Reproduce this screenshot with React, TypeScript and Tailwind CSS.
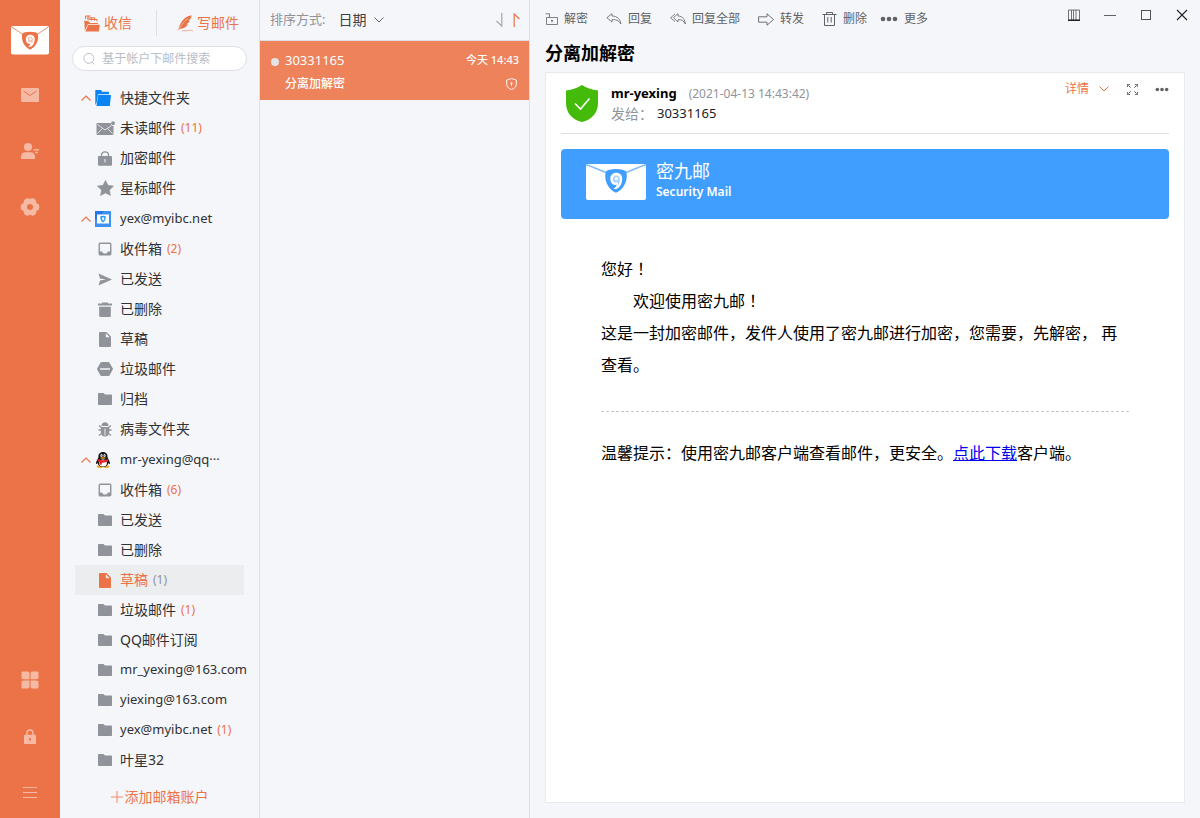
import type { ReactNode } from "react";

type IconProps = { className?: string };

/* ---------- brand ---------- */

function BrandSeal({ x, y, scale, color }: { x: number; y: number; scale: number; color: string }) {
  return (
    <g transform={`translate(${x} ${y}) scale(${scale})`}>
      <path d="M0.3 5.5C0.5 2.5 2 1.6 4.5 1.2C8.500 .1 13.5 .1 17.500 1.200C20 1.600 21.500 2.500 21.700 5.500C22.500 14 18 21 11 24.300C4 21 -.5 14 .3 5.500Z" fill={color} />
      <path d="M11.300 4.300C7.700 4.300 5.300 6.800 5.300 10.300C5.300 14 7.500 16.300 10 16.400C10.800 16.400 11.300 16.100 11.600 15.700C11.400 17.800 10.300 19.300 8.300 20.300C10 21 12 20.500 13.500 19.300C16 17.200 17.200 14 17.200 10.300C17.200 6.500 14.800 4.300 11.300 4.300Z" fill="#fff" />
      <path d="M11.300 6.900C9.200 6.900 7.900 8.300 7.900 10.400C7.900 12.600 9 14.200 10.500 14.200C9.800 12.800 13.400 13 13.300 16.800C14.300 15 14.800 12.900 14.800 10.600C14.800 8.300 13.500 6.900 11.300 6.900Z" fill={color} opacity=".45" />
      <circle cx="11.400" cy="10.200" r="1.600" fill="#fff" />
    </g>
  );
}

function RailLogo() {
  return (
    <svg viewBox="0 0 38 29" className="h-[29px] w-[38px]" aria-hidden="true">
      <rect width="38" height="28.500" rx="2" fill="#fff" />
      <path d="M1 1.200L12.500 8.800M37 1.200L25.500 8.800" stroke="#ec7347" strokeWidth=".8" />
      <BrandSeal x={10.800} y={5.400} scale={0.750} color="#ec7347" />
    </svg>
  );
}

function BannerLogo() {
  return (
    <svg viewBox="0 0 60 36" className="h-9 w-[60px]" aria-hidden="true">
      <rect width="60" height="36" rx="2" fill="#fff" />
      <path d="M0 .5L20 8.500M60 .5L40 8.500" stroke="#7ebbfb" strokeWidth="1.600" />
      <BrandSeal x={19} y={4.500} scale={1} color="#409eff" />
    </svg>
  );
}

/* ---------- rail icons ---------- */

const RailMail = () => (
  <svg viewBox="0 0 18 14" className="h-[14px] w-[18px]" aria-hidden="true">
    <rect width="18" height="14" rx="1" fill="#f6b9a3" />
    <path d="M2.500 3L9 7.500L15.500 3" fill="none" stroke="#ec7347" strokeWidth="1" />
  </svg>
);
const RailContact = () => (
  <svg viewBox="0 0 18 16" className="h-4 w-[18px]" fill="#f6b9a3" aria-hidden="true">
    <circle cx="7" cy="4" r="4" />
    <path d="M0 16V13.500C0 10.800 2 9.300 4.500 9.300H9.500C12 9.300 14 10.800 14 13.500V16ZM12.500 6H18V7.500H12.500ZM14 8.700H17V10.200H14Z" />
  </svg>
);
const RailGear = () => (
  <svg viewBox="0 0 20 18" className="h-[18px] w-5" fill="#f6b9a3" aria-hidden="true">
    <path fillRule="evenodd" d="M7.300.3C8.500 0 8.800.9 10 .9C11.200.9 11.500 0 12.700.3C14.100.6 15 1.300 15.800 2.300C16.500 3.200 15.900 3.900 16.500 4.900C17.100 5.900 18.500 5.500 19 6.700C19.500 8.200 19.500 9.800 19 11.300C18.500 12.500 17.100 12.100 16.500 13.100C15.900 14.100 16.500 14.800 15.800 15.700C15 16.700 14.100 17.400 12.700 17.700C11.500 18 11.200 17.100 10 17.100C8.800 17.100 8.500 18 7.300 17.700C5.900 17.400 5 16.700 4.200 15.700C3.500 14.800 4.100 14.100 3.500 13.100C2.900 12.100 1.500 12.500 1 11.300C.5 9.800.5 8.200 1 6.700C1.500 5.500 2.900 5.900 3.500 4.900C4.100 3.900 3.500 3.200 4.200 2.300C5 1.300 5.900.6 7.300.3ZM10 6A3 3 0 1 0 10 12A3 3 0 1 0 10 6Z" />
  </svg>
);
const RailGrid = () => (
  <svg viewBox="0 0 18 18" className="h-[18px] w-[18px]" fill="#f6b9a3" aria-hidden="true">
    <path d="M2 .5H6.500C7.800.5 8.500 1.200 8.500 2.500V8.200H2.500C1.200 8.200.5 7.500.5 6.200V2C.5 1 1 .5 2 .5ZM11.500.5H16C17 .5 17.500 1 17.500 2V6.200C17.500 7.500 16.800 8.200 15.500 8.200H9.500V2.500C9.500 1.200 10.200.5 11.500.5ZM2.500 9.500H8.500V15.500C8.500 16.800 7.800 17.500 6.500 17.500H2C1 17.500.5 17 .5 16V11.500C.5 10.200 1.200 9.500 2.500 9.500ZM9.500 9.500H15.500C16.800 9.500 17.500 10.200 17.500 11.500V16C17.500 17 17 17.500 16 17.500H11.500C10.200 17.500 9.500 16.800 9.500 15.500Z" />
  </svg>
);
const RailLock = () => (
  <svg viewBox="0 0 12 15" className="h-[15px] w-3" aria-hidden="true">
    <path d="M3 7V4C3 2 4.200 1 6 1C7.800 1 9 2 9 4V7" fill="none" stroke="#f6b9a3" strokeWidth="1.500" />
    <rect y="5.800" width="12" height="9.200" rx="1" fill="#f6b9a3" />
    <path d="M5 9H7V10.500H6.500V12H5.500V10.500H5Z" fill="#ec7347" />
  </svg>
);
const RailMenu = () => (
  <svg viewBox="0 0 14 12" className="h-3 w-[14px]" aria-hidden="true">
    <path d="M0 1.500H14M0 6.500H14M0 11.500H14" stroke="#f6b9a3" />
  </svg>
);

function RailButton({ label, children }: { label: string; children: ReactNode }) {
  return (
    <button type="button" aria-label={label} className="flex h-14 w-full items-center justify-center">
      {children}
    </button>
  );
}

/* ---------- folder icons ---------- */

const Inbox = () => (
  <svg viewBox="0 0 14 14" className="h-[14px] w-[14px]" aria-hidden="true">
    <rect x="1.250" y="1.250" width="11.500" height="11.500" rx="1" fill="none" stroke="#909399" strokeWidth="1.400" />
    <path d="M1 9.500H4.200C4.500 11 5.500 11.500 7 11.500C8.500 11.500 9.500 11 9.800 9.500H13V13H1Z" fill="#909399" />
  </svg>
);
const Folder = () => (
  <svg viewBox="0 0 14 12" className="h-3 w-[14px]" aria-hidden="true">
    <path d="M1 0H5.500L7 1.500H13C13.700 1.500 14 1.800 14 2.500V11C14 11.700 13.700 12 13 12H1C.3 12 0 11.700 0 11V1C0 .3.300 0 1 0Z" fill="#909399" />
  </svg>
);
const Draft = () => (
  <svg viewBox="0 0 12 15" className="h-[15px] w-3" fill="currentColor" aria-hidden="true">
    <path fillRule="evenodd" d="M1.200 0H7.500L12 4.500V13.500C12 14.500 11.500 15 10.500 15H1.500C.5 15 0 14.500 0 13.500V1.200C0 .4.400 0 1.200 0ZM6.800 1.200V4.200C6.800 4.900 7.100 5.200 7.800 5.200H10.800Z" />
  </svg>
);
const Trash = () => (
  <svg viewBox="0 0 14 15" className="h-[15px] w-[14px]" fill="#909399" aria-hidden="true">
    <path d="M4 .5H10V1.500H14V3.500H0V1.500H4ZM1.200 4.800H12.800V13.500C12.800 14.500 12.300 15 11.300 15H2.700C1.700 15 1.200 14.500 1.200 13.500Z" />
  </svg>
);
const Sent = () => (
  <svg viewBox="0 0 14 13" className="h-[13px] w-[14px]" fill="#909399" aria-hidden="true">
    <path d="M.5.500L14 6.500L.5 12.500L2 7.500L8 6.500L2 5.500Z" />
  </svg>
);
const Spam = () => (
  <svg viewBox="0 0 16 14" className="h-[14px] w-4" aria-hidden="true">
    <path d="M4.700 0H11.300C11.800 0 12.200.2 12.400.6L15.700 6.300C16 6.800 16 7.200 15.700 7.700L12.400 13.400C12.200 13.800 11.800 14 11.300 14H4.700C4.200 14 3.800 13.800 3.600 13.400L.3 7.700C0 7.200 0 6.800.3 6.300L3.600.6C3.800.2 4.200 0 4.700 0Z" fill="#909399" />
    <path d="M3 7H13" stroke="#f5f6f9" strokeWidth="1.500" />
  </svg>
);
const Bug = () => (
  <svg viewBox="0 0 14 15" className="h-[15px] w-[14px]" aria-hidden="true">
    <path d="M.5 8H13.500M1 3.500L3.500 5.500M13 3.500L10.500 5.500M1 13.500L3.500 11.500M13 13.500L10.500 11.500" stroke="#909399" strokeWidth="1.300" />
    <path d="M3.500 4C3.500 1.500 5 .3 7 .3C9 .3 10.500 1.500 10.500 4ZM2.800 4.900H11.200V10C11.200 13 9.500 14.600 7 14.600C4.500 14.600 2.800 13 2.800 10Z" fill="#909399" />
    <path d="M7 6.500V13.500" stroke="#f5f6f9" strokeWidth=".9" />
  </svg>
);
const Unread = () => (
  <svg viewBox="0 0 19 14" className="h-[14px] w-[19px]" aria-hidden="true">
    <path d="M1 2H14.800C14.800 4.200 15.800 5 17.500 5V12.500C17.500 13.500 17 14 16 14H2C1 14 .5 13.500.5 12.500V2.500C.5 2.200.7 2 1 2Z" fill="#909399" />
    <path d="M1.500 3.500L9 9L15.500 4.500M1.500 12.500L6.500 7.300M16.500 12.500L11.500 7.300" fill="none" stroke="#f5f6f9" strokeWidth=".8" />
    <circle cx="17" cy="2.200" r="1.900" fill="#909399" />
  </svg>
);
const Lock = () => (
  <svg viewBox="0 0 14 15" className="h-[15px] w-[14px]" aria-hidden="true">
    <path d="M3.500 6V4C3.500 2 4.800.900 7 .9C9.200.9 10.500 2 10.500 4V6" fill="none" stroke="#909399" strokeWidth="1.300" />
    <rect y="5" width="14" height="9.800" rx="1" fill="#909399" />
    <path d="M7 8V11.500" stroke="#f5f6f9" strokeWidth="1" />
  </svg>
);
const Star = () => (
  <svg viewBox="0 0 17 16" className="h-4 w-[17px]" aria-hidden="true">
    <path d="M8.500.3L11 5.300L16.600 6.100L12.500 10L13.500 15.600L8.500 13L3.500 15.600L4.500 10L.4 6.100L6 5.300Z" fill="#909399" stroke="#909399" strokeWidth=".5" strokeLinejoin="round" />
  </svg>
);
const BlueFolder = () => (
  <svg viewBox="0 0 16 16" className="h-4 w-4" fill="#0b84f3" aria-hidden="true">
    <path d="M.3 0H6L7.200 1.800H14V4.200H3L1.600 12.800L.3 15Z" />
    <path d="M3.200 5H16L14.800 16H1.500Z" />
  </svg>
);
const MyibcIcon = () => (
  <svg viewBox="0 0 16 16" className="h-4 w-4" aria-hidden="true">
    <rect width="16" height="16" rx=".6" fill="#3d92f2" />
    <path d="M0 0H9L3 8L0 9Z" fill="#2478e6" />
    <rect x="2" y="3.500" width="12" height="9" fill="#fff" />
    <path d="M5.300 5.200Q8 4.200 10.700 5.200Q11 9.500 8 11.500Q5 9.500 5.300 5.200Z" fill="#2d9cf0" />
    <path d="M8.300 6.200Q6.700 6.300 7 8Q8 8.400 7.800 10Q9.500 8.500 9.300 7Q9 6.200 8.300 6.200Z" fill="#fff" />
  </svg>
);
const QQIcon = () => (
  <svg viewBox="0 0 16 16" className="h-4 w-4" aria-hidden="true">
    <ellipse cx="5" cy="14.600" rx="3.300" ry="1.300" fill="#f9a61a" />
    <ellipse cx="11" cy="14.600" rx="3.300" ry="1.300" fill="#f9a61a" />
    <path d="M8 0C4.800 0 3.200 2.300 3.400 5.500C2.500 7.500 1 9.500 1 11.500C1.200 12.500 2 12 2.700 11C3.200 13.700 5 15 8 15C11 15 12.800 13.700 13.300 11C14 12 14.800 12.500 15 11.500C15 9.500 13.500 7.500 12.600 5.500C12.800 2.300 11.200 0 8 0Z" fill="#161616" />
    <ellipse cx="8" cy="11" rx="3.900" ry="3.600" fill="#fff" />
    <ellipse cx="6.500" cy="3.600" rx="1.100" ry="1.500" fill="#fff" />
    <ellipse cx="9.500" cy="3.600" rx="1.100" ry="1.500" fill="#fff" />
    <circle cx="6.800" cy="3.800" r=".5" />
    <circle cx="9.200" cy="3.800" r=".5" />
    <ellipse cx="8" cy="6" rx="2.800" ry=".8" fill="#f9a61a" />
    <path d="M3 7Q8 9.600 13 7L13.300 9.300Q10 11 6.800 10.700V12.800L4.500 12.500L4.600 10L2.800 9.300Z" fill="#e8202a" />
  </svg>
);

/* ---------- small line icons ---------- */

const Chevron = ({ className = "" }: IconProps) => (
  <svg viewBox="0 0 10 6" className={className} fill="none" stroke="currentColor" aria-hidden="true">
    <path d="M.5.500L5 5L9.500.5" />
  </svg>
);
const ChevronUp = () => (
  <svg viewBox="0 0 10 6" className="h-[6px] w-[10px]" fill="none" stroke="#ec7347" strokeWidth="1.200" aria-hidden="true">
    <path d="M.5 5.500L5 1L9.500 5.500" />
  </svg>
);
const ReceiveIcon = () => (
  <svg viewBox="0 0 16 17" className="h-[17px] w-4" aria-hidden="true">
    <path d="M1.500 1H6.500M1.500 1V4M4 1V5.500M3 3H7.500V5.500M7 2.800H10.500V5.500M5 4.500H13V6.500" fill="none" stroke="#ec7347" strokeWidth="1" />
    <path d="M.3 5.500L5 6.500L6 8H14V9H4L1.500 14L.8 15.500Z" fill="#ec7347" />
    <path d="M4.300 9.800H15.800L14.800 16.500H1.300Z" fill="#ec7347" />
  </svg>
);
const FeatherIcon = () => (
  <svg viewBox="0 0 16 17" className="h-[17px] w-4" aria-hidden="true">
    <path d="M14.500.3C10.500.8 7 3.300 4.800 6.500C3.300 8.700 2.200 11 2 13C1.300 14 .7 15 .3 16C1 15 1.800 14.200 2.700 13.700C5.500 13.900 9 12.500 11 9.500L9 9.300C10.500 8.800 12 7.600 13 6L11.500 5.800C13.500 4.300 14.500 2.200 14.500.3Z" fill="#ec7347" />
    <path d="M2.500 13C4.500 9.500 7.500 6 11 3.500" stroke="#f5f6f9" strokeWidth=".5" fill="none" />
    <path d="M5 16.300C7.500 14.200 9 16.800 11.500 15.500C13 14.800 14 15.300 15.800 16" stroke="#ec7347" strokeWidth=".6" fill="none" />
  </svg>
);
const SearchIcon = () => (
  <svg viewBox="0 0 14 14" className="h-[14px] w-[14px]" fill="none" stroke="#b4b8c0" strokeWidth="1" aria-hidden="true">
    <circle cx="6.700" cy="6.300" r="5.700" />
    <path d="M10.500 10.500L13 13.200" />
  </svg>
);
const UnlockIcon = () => (
  <svg viewBox="0 0 13 12" className="h-3 w-[13px]" fill="none" stroke="#606266" strokeWidth=".8" aria-hidden="true">
    <path d="M.5.800H4.500V4.500M1.500 4.500H12.500V11.500H1.500ZM7 6.800V9.500M6 7.500H8" />
  </svg>
);
const ReplyIcon = () => (
  <svg viewBox="0 0 16 12" className="h-3 w-4" fill="none" stroke="#606266" strokeWidth=".8" strokeLinejoin="round" aria-hidden="true">
    <path d="M6 .7L.8 4.700L6 9V6.700C10 6.300 12.800 7.500 14.800 11C14.500 6.500 11.500 3 6 3Z" />
  </svg>
);
const ReplyAllIcon = () => (
  <svg viewBox="0 0 16 12" className="h-3 w-4" fill="none" stroke="#606266" strokeWidth=".8" strokeLinejoin="round" aria-hidden="true">
    <path d="M8 .7L3.500 4.700L8 9V6.700C11.500 6.300 13.800 7.800 15.300 11C15 6.500 12.500 3 8 3ZM5 1L.6 4.800L5 8.600" />
  </svg>
);
const ForwardIcon = () => (
  <svg viewBox="0 0 16 13" className="h-[13px] w-4" fill="none" stroke="#606266" strokeWidth=".9" strokeLinejoin="round" aria-hidden="true">
    <path d="M.6 3.800H9V.8L15.500 6.500L9 12.200V9.200H.6Z" />
  </svg>
);
const DeleteIcon = () => (
  <svg viewBox="0 0 15 14" className="h-[14px] w-[15px]" fill="none" stroke="#606266" strokeWidth="1" aria-hidden="true">
    <path d="M.5 2.500H14.500M4.500 2.500V.5H10.500V2.500M2.500 2.500V13.500H12.500V2.500M5.800 5V10.500M9.200 5V10.500" />
  </svg>
);
const Dots = ({ className = "" }: IconProps) => (
  <svg viewBox="0 0 18 6" className={className} fill="#606266" aria-hidden="true">
    <circle cx="3" cy="3" r="2.300" />
    <circle cx="9" cy="3" r="2.300" />
    <circle cx="15" cy="3" r="2.300" />
  </svg>
);
const MailShield = () => (
  <svg viewBox="0 0 11 12" className="h-3 w-[11px]" fill="none" stroke="#fff" strokeWidth=".9" aria-hidden="true">
    <path d="M5.500.6L10.300 2V6.300C10.300 9 8 10.700 5.500 11.500C3 10.700.7 9 .7 6.300V2Z" />
    <path d="M5.500 4.300V7.800M4.300 5.300H6.700" />
  </svg>
);
const GreenShield = () => (
  <svg viewBox="0 0 32 37" className="h-[37px] w-8" aria-hidden="true">
    <path d="M16 0C20.500 3 25.500 4.800 32 5.500V18C32 28 26 34.500 16 37C6 34.500 0 28 0 18V5.500C6.500 4.800 11.500 3 16 0Z" fill="#44bb0b" />
    <path d="M9 18.500L14.500 24L23.500 13.500" fill="none" stroke="#fff" strokeWidth="1.600" />
  </svg>
);

/* ---------- sidebar ---------- */

type FolderItem = { name: string; icon: ReactNode; count?: number; active?: boolean; latin?: boolean };
type FolderGroup = { name: string; icon: ReactNode; items: FolderItem[]; latin?: boolean };

const groups: FolderGroup[] = [
  {
    name: "快捷文件夹",
    icon: <BlueFolder />,
    items: [
      { name: "未读邮件", icon: <Unread />, count: 11 },
      { name: "加密邮件", icon: <Lock /> },
      { name: "星标邮件", icon: <Star /> },
    ],
  },
  {
    name: "yex@myibc.net",
    icon: <MyibcIcon />,
    latin: true,
    items: [
      { name: "收件箱", icon: <Inbox />, count: 2 },
      { name: "已发送", icon: <Sent /> },
      { name: "已删除", icon: <Trash /> },
      { name: "草稿", icon: <Draft /> },
      { name: "垃圾邮件", icon: <Spam /> },
      { name: "归档", icon: <Folder /> },
      { name: "病毒文件夹", icon: <Bug /> },
    ],
  },
  {
    name: "mr-yexing@qq···",
    icon: <QQIcon />,
    latin: true,
    items: [
      { name: "收件箱", icon: <Inbox />, count: 6 },
      { name: "已发送", icon: <Folder /> },
      { name: "已删除", icon: <Folder /> },
      { name: "草稿", icon: <Draft />, count: 1, active: true },
      { name: "垃圾邮件", icon: <Folder />, count: 1 },
      { name: "QQ邮件订阅", icon: <Folder /> },
      { name: "mr_yexing@163.com", icon: <Folder />, latin: true },
      { name: "yiexing@163.com", icon: <Folder />, latin: true },
      { name: "yex@myibc.net", icon: <Folder />, count: 1, latin: true },
      { name: "叶星32", icon: <Folder /> },
    ],
  },
];

function FolderRow({ item }: { item: FolderItem }) {
  return (
    <li>
      <button
        type="button"
        className={`flex h-[30px] w-full items-center whitespace-nowrap pl-5 ${
          item.active ? "bg-[#ebedef] text-[#ec7347]" : "text-[#303133]"
        }`}
      >
        <span className={`flex w-5 shrink-0 justify-center ${item.active ? "text-[#ec7347]" : "text-[#909399]"}`}>
          {item.icon}
        </span>
        <span className={`ml-[5px] ${item.latin ? "text-[13px]" : "text-sm"}`}>{item.name}</span>
        {item.count !== undefined && (
          <span className={`ml-[5px] text-xs ${item.active ? "text-[#909399]" : "text-[#ec7347]"}`}>({item.count})</span>
        )}
      </button>
    </li>
  );
}

function Sidebar() {
  return (
    <aside className="flex w-[200px] shrink-0 flex-col border-r border-[#dcdfe6]">
      <div className="flex h-[46px] items-center text-sm text-[#ec7347]">
        <button type="button" className="ml-6 flex items-center gap-1">
          <ReceiveIcon />
          收信
        </button>
        <div className="ml-6 h-[26px] w-px bg-[#dcdfe6]" />
        <button type="button" className="ml-5 flex items-center gap-1">
          <FeatherIcon />
          写邮件
        </button>
      </div>
      <label className="mx-3 flex h-[25px] items-center rounded-full border border-[#dcdfe6] bg-white pl-[10px]">
        <SearchIcon />
        <input
          type="search"
          aria-label="搜索"
          placeholder="基于帐户下邮件搜索"
          className="ml-[7px] w-full min-w-0 bg-transparent pr-3 text-xs outline-none placeholder:text-[#b9bdc6]"
        />
      </label>
      <nav className="mt-3 flex flex-col gap-px px-[15px]">
        {groups.map((group) => (
          <section key={group.name}>
            <button type="button" className="flex h-[30px] w-full items-center whitespace-nowrap pl-[6px] text-[#303133]">
              <ChevronUp />
              <span className="ml-1">{group.icon}</span>
              <span className={`ml-[9px] ${group.latin ? "text-[13px]" : "text-sm"}`}>{group.name}</span>
            </button>
            <ul>
              {group.items.map((item) => (
                <FolderRow key={item.name} item={item} />
              ))}
            </ul>
          </section>
        ))}
      </nav>
      <button type="button" className="mt-[10px] flex h-6 items-center justify-center gap-0.5 text-sm text-[#ec7347]">
        <svg viewBox="0 0 12 12" className="h-3 w-3" stroke="currentColor" strokeWidth=".8" aria-hidden="true">
          <path d="M6 0V12M0 6H12" />
        </svg>
        添加邮箱账户
      </button>
    </aside>
  );
}

/* ---------- message list ---------- */

function MessageList() {
  return (
    <section className="flex w-[270px] shrink-0 flex-col border-r border-[#dcdfe6]">
      <div className="flex h-[41px] items-center justify-between border-b border-[#dcdfe6] pl-[10px] pr-[9px]">
        <div className="flex items-center">
          <label htmlFor="sort" className="text-[13px] text-[#909399]">
            排序方式:
          </label>
          <div className="ml-[13px] grid items-center">
            <select id="sort" defaultValue="date" className="col-start-1 row-start-1 appearance-none bg-transparent pr-[18px] text-sm text-[#404246] outline-none">
              <option value="date">日期</option>
            </select>
            <Chevron className="pointer-events-none col-start-1 row-start-1 h-[6px] w-[10px] justify-self-end text-[#606266]" />
          </div>
        </div>
        <div className="flex items-center gap-[10px]">
          <button type="button" aria-label="降序">
            <svg viewBox="0 0 7 14" className="h-[14px] w-[7px]" fill="none" stroke="#a3a6ac" strokeWidth="1.200" aria-hidden="true">
              <path d="M5.800 0V13L.5 8" />
            </svg>
          </button>
          <button type="button" aria-label="升序">
            <svg viewBox="0 0 7 14" className="h-[14px] w-[7px]" fill="none" stroke="#ec7347" strokeWidth="1.200" aria-hidden="true">
              <path d="M1.200 14V1L6.500 6" />
            </svg>
          </button>
        </div>
      </div>
      <button type="button" className="flex flex-col bg-[#ed825b] px-[10px] pb-[5px] pt-2 text-left text-white">
        <span className="flex h-[23px] w-full items-center">
          <span className="ml-px mt-[3px] h-2 w-2 rounded-full bg-[#e4e4e6]" />
          <span className="ml-[6px] text-[13px]">30331165</span>
          <span className="ml-auto text-[11px] font-medium">今天 14:43</span>
        </span>
        <span className="flex h-[23px] w-full items-center justify-between pl-[15px] pr-[2px]">
          <span className="text-xs font-medium">分离加解密</span>
          <MailShield />
        </span>
      </button>
    </section>
  );
}

/* ---------- reader ---------- */

const actions: { label: string; icon: ReactNode }[] = [
  { label: "解密", icon: <UnlockIcon /> },
  { label: "回复", icon: <ReplyIcon /> },
  { label: "回复全部", icon: <ReplyAllIcon /> },
  { label: "转发", icon: <ForwardIcon /> },
  { label: "删除", icon: <DeleteIcon /> },
];

function Toolbar() {
  return (
    <header className="flex h-9 shrink-0 items-start justify-between">
      <div className="flex h-[38px] items-center gap-[13px] pl-[15px] text-xs text-[#606266]">
        <div className="flex items-center gap-[18px]">
          {actions.map((action) => (
            <button key={action.label} type="button" className="flex items-center gap-[6px]">
              {action.icon}
              {action.label}
            </button>
          ))}
        </div>
        <button type="button" className="flex items-center gap-[6px]">
          <Dots className="h-[6px] w-[18px]" />
          更多
        </button>
      </div>
      <div className="flex">
        <button type="button" aria-label="布局" className="flex h-[30px] w-9 items-center justify-center">
          <svg viewBox="0 0 12 12" className="h-3 w-3" fill="none" stroke="#505256" aria-hidden="true">
            <path d="M.5 1H11.500V11H.5ZM3.500 1V11M5.500 1V11M8 1V11" strokeWidth=".8" />
            <path d="M0 11.300H12" stroke="#111" strokeWidth="1.200" />
          </svg>
        </button>
        <button type="button" aria-label="最小化" className="flex h-[30px] w-9 items-center justify-center">
          <svg viewBox="0 0 12 12" className="h-3 w-3" stroke="#606266" aria-hidden="true">
            <path d="M0 6.500H12" />
          </svg>
        </button>
        <button type="button" aria-label="最大化" className="flex h-[30px] w-9 items-center justify-center">
          <svg viewBox="0 0 12 12" className="h-3 w-3" fill="none" stroke="#505256" aria-hidden="true">
            <rect x="1.500" y="1.500" width="9" height="9" />
          </svg>
        </button>
        <button type="button" aria-label="关闭" className="flex h-[30px] w-9 items-center justify-center">
          <svg viewBox="0 0 12 12" className="h-3 w-3" stroke="#202124" strokeWidth="1.100" aria-hidden="true">
            <path d="M1 1L11 11M11 1L1 11" />
          </svg>
        </button>
      </div>
    </header>
  );
}

const Bang = () => <span className="font-['Noto_Sans_CJK_TC',sans-serif] leading-none">！</span>;

function Reader() {
  return (
    <main className="flex min-w-0 flex-1 flex-col">
      <Toolbar />
      <h1 className="h-9 shrink-0 pl-[15px] text-lg leading-[34px] font-bold text-black">分离加解密</h1>
      <article className="mx-[15px] mb-[15px] flex-1 border border-[#e8eaee] bg-white px-[15px]">
        <div className="flex h-[61px] items-start border-b border-[#dcdfe6] pt-3">
          <div className="ml-[5px]">
            <GreenShield />
          </div>
          <div className="-mt-px ml-[13px]">
            <div className="flex h-5 items-center">
              <span className="text-[13px] font-bold text-black">mr-yexing</span>
              <span className="ml-3 text-xs text-[#909399]">(2021-04-13 14:43:42)</span>
            </div>
            <div className="flex h-5 items-center text-[13px]">
              <span className="text-sm text-[#909399]">发给：</span>
              <span className="ml-1 text-[#202124]">30331165</span>
            </div>
          </div>
          <div className="-mt-1 ml-auto flex h-4 items-center">
            <button type="button" className="flex items-center gap-[10px] text-xs text-[#ec7347]">
              详情
              <Chevron className="h-[6px] w-[10px]" />
            </button>
            <button type="button" aria-label="全屏" className="ml-[18px]">
              <svg viewBox="0 0 11 11" className="h-[11px] w-[11px]" fill="none" stroke="#505256" strokeWidth="1" aria-hidden="true">
                <path d="M.5 3V.5H3M8 .5H10.500V3M10.500 8V10.500H8M3 10.500H.5V8M.5.500L4 4M10.500.5L7 4M10.500 10.500L7 7M.5 10.500L4 7" strokeDasharray="1.600 .5" />
              </svg>
            </button>
            <button type="button" aria-label="更多操作" className="ml-[17px]">
              <Dots className="h-[5px] w-[14px]" />
            </button>
          </div>
        </div>
        <div className="mt-[15px] flex h-[70px] items-start rounded bg-[#409eff] pl-[25px] pt-[15px] text-white">
          <BannerLogo />
          <div className="-mt-1 ml-[10px]">
            <p className="text-lg leading-[22px]">密九邮</p>
            <p className="text-xs leading-5 font-semibold">Security Mail</p>
          </div>
        </div>
        <div className="mx-10 mt-[34px] text-base leading-8 text-black">
          <p>
            您好
            <Bang />
          </p>
          <p className="pl-8">
            欢迎使用密九邮
            <Bang />
          </p>
          <p>这是一封加密邮件，发件人使用了密九邮进行加密，您需要，先解密， 再查看。</p>
          <hr className="mt-[30px] mb-[25px] border-t border-dashed border-[#c8c8c8]" />
          <p>
            温馨提示：使用密九邮客户端查看邮件，更安全。
            <a href="#download" className="text-[#0000ee] underline">
              点此下载
            </a>
            客户端。
          </p>
        </div>
      </article>
    </main>
  );
}

export default function App() {
  return (
    <div className="flex min-h-screen bg-[#f5f6f9] font-['Noto_Sans','Noto_Sans_CJK_SC',sans-serif] text-[#303133]">
      <div className="flex w-[60px] shrink-0 flex-col items-center bg-[#ec7347]">
        <div className="mt-[26px] mb-3">
          <RailLogo />
        </div>
        <RailButton label="邮件">
          <RailMail />
        </RailButton>
        <RailButton label="联系人">
          <RailContact />
        </RailButton>
        <RailButton label="设置">
          <RailGear />
        </RailButton>
        <div className="mt-auto w-full [&>button]:pt-1">
          <RailButton label="应用">
            <RailGrid />
          </RailButton>
          <RailButton label="锁定">
            <RailLock />
          </RailButton>
          <RailButton label="菜单">
            <RailMenu />
          </RailButton>
        </div>
      </div>
      <Sidebar />
      <MessageList />
      <Reader />
    </div>
  );
}
